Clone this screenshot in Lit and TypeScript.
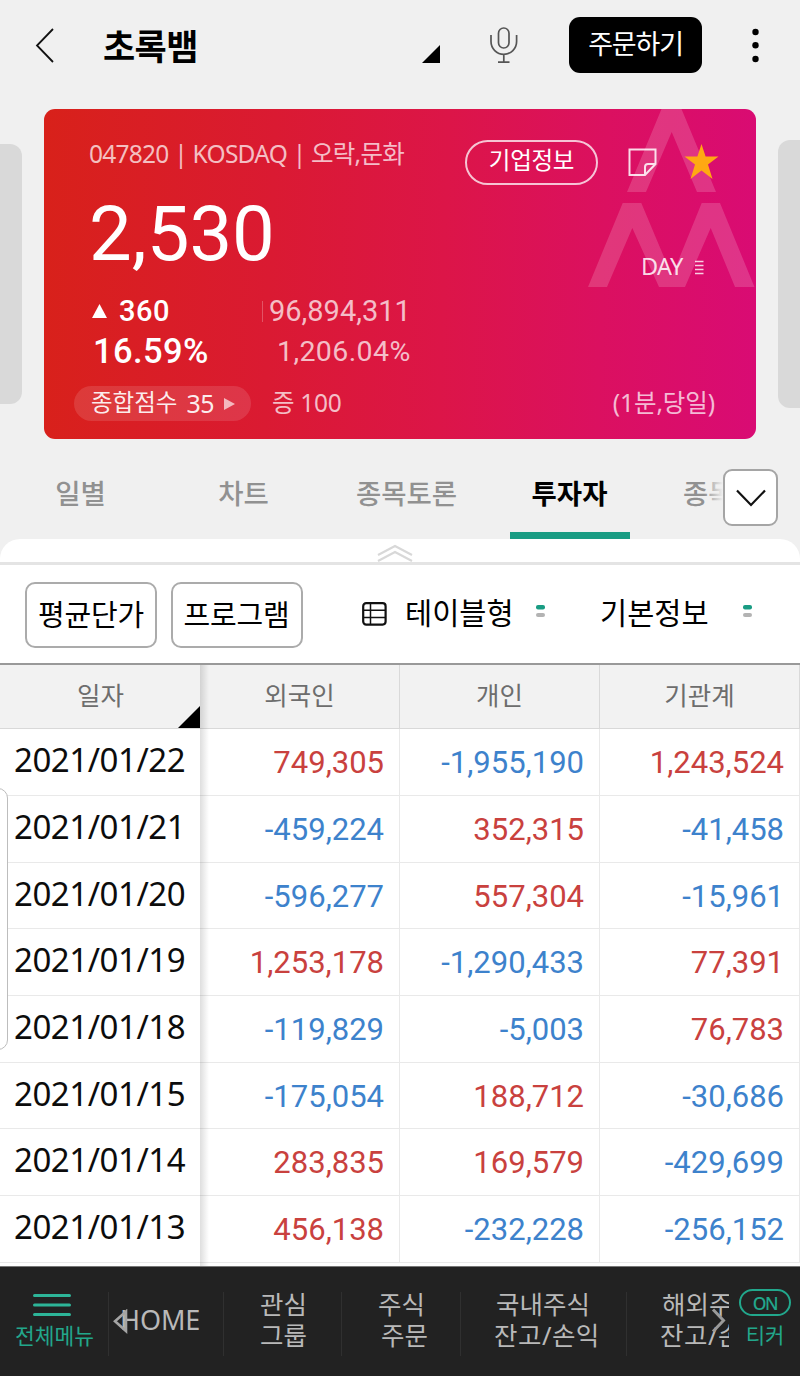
import { LitElement, html, css } from "lit";
import { customElement } from "lit/decorators.js";
import { classMap } from "lit/directives/class-map.js";

const ROWS: [string, string, string, string][] = [
  ["2021/01/22", "749,305", "-1,955,190", "1,243,524"],
  ["2021/01/21", "-459,224", "352,315", "-41,458"],
  ["2021/01/20", "-596,277", "557,304", "-15,961"],
  ["2021/01/19", "1,253,178", "-1,290,433", "77,391"],
  ["2021/01/18", "-119,829", "-5,003", "76,783"],
  ["2021/01/15", "-175,054", "188,712", "-30,686"],
  ["2021/01/14", "283,835", "169,579", "-429,699"],
  ["2021/01/13", "456,138", "-232,228", "-256,152"],
];

const base = css`
  :host {
    display: block;
    font-family: "Noto Sans", "Noto Sans CJK KR", sans-serif;
  }
  * { box-sizing: border-box; }
  svg { display: block; flex: none; }
  span, div { white-space: nowrap; }
`;

@customElement("top-bar")
class TopBar extends LitElement {
  static styles = [base, css`
    .bar { display: flex; height: 109px; align-items: flex-start; }
    .back { margin: 28px 0 0 35px; }
    .title { margin: 21px 0 0 49px; width: 319px; font-size: 35px; line-height: 52px; font-weight: 700; letter-spacing: -0.6px; }
    .tri { margin-top: 45px; }
    .mic { margin: 27px 0 0 50px; }
    .order {
      margin: 17px 0 0 51px; width: 133px; height: 56px; border-radius: 11px; background: #000;
      color: #fff; font-size: 27px; line-height: 54px; text-align: center; letter-spacing: -1.2px;
    }
    .more { margin: 28px 0 0 49px; }
  `];
  render() {
    return html`<div class="bar">
      <svg class="back" width="19" height="36" viewBox="0 0 19 36"><path d="M18 1 L2 17.500 L18 34" fill="none" stroke="#111" stroke-width="1.800"/></svg>
      <div class="title">초록뱀</div>
      <svg class="tri" width="18" height="18" viewBox="0 0 18 18"><path d="M18 0V18H0Z"/></svg>
      <svg class="mic" width="28" height="37" viewBox="0 0 28 37" fill="none" stroke="#555" stroke-width="1.700">
        <rect x="8.500" y="1" width="10.500" height="20" rx="5.200"/>
        <path d="M1 8V14.500A12.800 12.800 0 0 0 26.600 14.500V8M13.800 27.500V35M8 35.200H19.500"/>
      </svg>
      <div class="order">주문하기</div>
      <svg class="more" width="9" height="36" viewBox="0 0 9 36"><circle cx="4.500" cy="4" r="3.200"/><circle cx="4.500" cy="17.300" r="3.200"/><circle cx="4.500" cy="31" r="3.200"/></svg>
    </div>`;
  }
}

@customElement("stock-card")
class StockCard extends LitElement {
  static styles = [base, css`
    .deck { display: flex; height: 330px; }
    .peek { width: 22px; background: #d9d9d9; flex: none; }
    .prev { height: 260px; margin: 35px 22px 0 0; border-radius: 0 12px 12px 0; }
    .next { height: 268px; margin: 31px 0 0 22px; border-radius: 12px 0 0 12px; }
    .card {
      position: relative; width: 712px; height: 330px; border-radius: 11px; overflow: hidden; flex: none;
      background: linear-gradient(92deg, #d8211a 0%, #da1a32 32%, #dc1548 56%, #db1060 78%, #d90b74 100%);
      color: rgba(255, 255, 255, 0.72);
    }
    .mark { position: absolute; left: 0; top: 0; }
    .body { position: relative; }
    .row { display: flex; align-items: flex-start; }
    .r1 { padding: 31px 0 0 45px; height: 75px; }
    .code { width: 376px; font-size: 24.5px; line-height: 27px; letter-spacing: -0.75px; }
    .pill {
      width: 133px; height: 45px; border: 2px solid rgba(255, 255, 255, 0.75); border-radius: 23px; color: #fff;
      font-size: 23.5px; line-height: 37px; text-align: center; letter-spacing: -0.3px;
    }
    .note { margin: 8px 0 0 30px; }
    .star { margin: 4px 0 0 27px; }
    .r2 { height: 108px; padding-left: 45px; font-family: Roboto, sans-serif; }
    .price { width: 552px; font-size: 76px; line-height: 100px; color: #fff; }
    .day { font-family: "Noto Sans", sans-serif; font-size: 23.5px; line-height: 30px; margin-top: 67px; width: 54px; color: rgba(255, 255, 255, .85); letter-spacing: -.6px; }
    .bars { margin-top: 76px; }
    .r3, .r4 { font-family: Roboto, sans-serif; height: 41px; line-height: 39px; }
    .r3 { padding-left: 48px; }
    .up { margin: 12px 12px 0 0; }
    .diff { width: 143px; font-size: 29px; font-weight: 500; color: #fff; letter-spacing: .5px; }
    .rule { width: 1px; height: 21px; margin: 9px 6px 0 0; background: rgba(255, 255, 255, .25); }
    .vol { font-size: 29px; }
    .r4 { padding-left: 49px; line-height: 37px; }
    .pct { width: 184px; font-size: 34.5px; font-weight: 500; color: #fff; letter-spacing: .4px; }
    .vpct { font-size: 28.5px; letter-spacing: .4px; }
    .r5 { padding: 12px 41px 0 30px; line-height: 35px; }
    .score { display: flex; width: 177px; height: 35px; border-radius: 18px; background: rgba(255, 255, 255, .12); padding-left: 17px; font-size: 23.5px; line-height: 33px; color: rgba(255,255,255,.92); }
    .score b { font-weight: 400; font-size: 25px; line-height: 34px; margin: 0 10px 0 9px; letter-spacing: -.5px; }
    .go { margin-top: 12px; }
    .margin { margin-left: 21px; font-size: 24.5px; line-height: 34px; flex: 1; letter-spacing: -.3px; }
    .span { font-size: 24.5px; line-height: 34px; letter-spacing: -.1px; }
  `];
  render() {
    return html`<div class="deck">
      <div class="peek prev"></div>
      <div class="card">
        <svg class="mark" width="712" height="330" viewBox="44 109 712 330" fill="#fff" fill-opacity=".165">
          <path d="M661.500 109H681.500L716 192H697L671.700 132L646 192H627Z"/>
          <path d="M588 287L622.700 203H641.300L672 276L701.700 203H720L754.500 287H735L710.700 228L685 287H659L632.300 228L607 287Z"/>
        </svg>
        <div class="body">
          <div class="row r1">
            <div class="code">047820 | KOSDAQ | 오락,문화</div>
            <div class="pill">기업정보</div>
            <svg class="note" width="29" height="29" viewBox="0 0 29 29" fill="none" stroke="#fff" stroke-opacity=".85" stroke-width="2"><path d="M1.500 1.500H27.500V16L17 27H1.500ZM17 27V19Q17 16 20 16H27.500"/></svg>
            <svg class="star" width="35" height="36" viewBox="0 0 35 36" fill="#ffa812"><path d="M17.500 0L21.600 12.500H34.500L24 20.600L28.500 35L17.500 26.500L6.500 35L11 20.600L.500 12.500H13.400Z"/></svg>
          </div>
          <div class="row r2">
            <div class="price">2,530</div>
            <div class="day">DAY</div>
            <svg class="bars" width="9" height="15" viewBox="0 0 9 15" stroke="#fff" stroke-opacity=".8" stroke-width="1.600"><path d="M0 1.500H8.500M0 5.500H8.500M0 9.500H8.500M0 13.500H8.500"/></svg>
          </div>
          <div class="row r3">
            <svg class="up" width="15" height="14" viewBox="0 0 15 14"><path d="M7.500 0L15 14H0Z" fill="#fff"/></svg>
            <div class="diff">360</div><div class="rule"></div><div class="vol">96,894,311</div>
          </div>
          <div class="row r4"><div class="pct">16.59%</div><div class="vpct">1,206.04%</div></div>
          <div class="row r5">
            <div class="score">종합점수<b>35</b><svg class="go" width="11" height="12" viewBox="0 0 11 12"><path d="M0 0L11 6L0 12Z" fill="#fff" fill-opacity=".65"/></svg></div>
            <div class="margin">증 100</div>
            <div class="span">(1분,당일)</div>
          </div>
        </div>
      </div>
      <div class="peek next"></div>
    </div>`;
  }
}

@customElement("tab-strip")
class TabStrip extends LitElement {
  static styles = [base, css`
    .strip { position: relative; height: 100px; overflow: hidden; }
    .tabs { display: flex; width: 815px; margin-left: -1px; }
    .tab { width: 163px; height: 100px; display: flex; flex-direction: column; align-items: center; font-size: 27.5px; font-weight: 500; line-height: 40px; padding-top: 35px; color: #919191; }
    .on { color: #000; font-weight: 700; }
    .on::after { content: ""; width: 120px; height: 7px; margin-top: 18px; background: #199c83; }
    .fade { position: absolute; left: 704px; top: 20px; width: 96px; height: 70px; background: linear-gradient(90deg, rgba(240,240,240,0), #f0f0f0 19px); }
    .drop { position: absolute; left: 723px; top: 30px; width: 55px; height: 57px; border: 2px solid #a5a5a5; border-radius: 9px; background: #fff; padding: 18px 0 0 11px; }
  `];
  render() {
    const tabs = ["일별", "차트", "종목토론", "투자자", "종목"];
    return html`<div class="strip">
      <div class="tabs">${tabs.map((t, i) => html`<div class=${classMap({ tab: true, on: i === 3, last: i === 4 })}>${t}</div>`)}</div>
      <div class="fade"></div>
      <div class="drop"><svg width="30" height="18" viewBox="0 0 30 18"><path d="M1 1.500L15 16L29 1.500" fill="none" stroke="#111" stroke-width="2.200"/></svg></div>
    </div>`;
  }
  static {
    TabStrip.styles.push(css`.last { align-items: flex-start; padding-left: 32px; }`);
  }
}

@customElement("tool-row")
class ToolRow extends LitElement {
  static styles = [base, css`
    .grip { height: 26px; background: #fff; border-bottom: 3px solid #e4e4e4; display: flex; justify-content: center; padding: 5px 11px 0 0; }
    .corner { background: #fff; border-radius: 20px 20px 0 0; overflow: hidden; }
    .tools { display: flex; height: 98px; background: #fff; padding: 17px 0 0 25px; color: #000; }
    .btn { width: 132px; height: 66px; border: 2px solid #ababab; border-radius: 10px; margin-right: 13.5px; font-size: 29px; line-height: 61px; text-align: center; letter-spacing: -.2px; }
    .grid { margin: 20px 18px 0 46px; }
    .text { font-size: 29.5px; line-height: 61px; }
    .t1 { width: 131px; }
    .t2 { width: 143px; margin-left: 55px; }
    .dot { margin-top: 23px; }
  `];
  dots() {
    return html`<svg class="dot" width="9" height="13" viewBox="0 0 9 13"><rect width="9" height="4.500" rx="2" fill="#199c83"/><rect y="8" width="9" height="4" rx="2" fill="#b3b3b3"/></svg>`;
  }
  render() {
    return html`<div class="corner"><div class="grip">
      <svg width="36" height="18" viewBox="0 0 36 18" fill="none" stroke="#d8d8d8" stroke-width="2.200"><path d="M1 11L18 2L35 11M1 17L18 8L35 17"/></svg>
    </div></div>
    <div class="tools">
      <div class="btn">평균단가</div><div class="btn">프로그램</div>
      <svg class="grid" width="25" height="24" viewBox="0 0 25 24" fill="none" stroke="#111"><rect x="1.200" y="1.200" width="22.400" height="21.400" rx="3" stroke-width="2.200"/><path d="M8.500 1V23M1 8.300H24M1 15.500H24" stroke-width="1.500"/></svg>
      <div class="text t1">테이블형</div>${this.dots()}
      <div class="text t2">기본정보</div>${this.dots()}
    </div>`;
  }
}

@customElement("investor-table")
class InvestorTable extends LitElement {
  static styles = [base, css`
    .table { position: relative; height: 603px; background: #fff; border-top: 2px solid #999; overflow: hidden; }
    .line { display: grid; grid-template-columns: 200px 200px 200px 200px; height: 66.67px; border-bottom: 1px solid #e9e9e9; }
    .head { height: 64.300px; background: #f2f2f2; border-bottom: 1px solid #d9d9d9; }
    .head .cell { font-family: "Noto Sans", "Noto Sans CJK KR", sans-serif; color: #6d6d6d; font-size: 25.5px; line-height: 60px; text-align: center; padding: 0; border-right-color: #d9d9d9; }
    .cell { font-family: Roboto, sans-serif; font-size: 31px; line-height: 67px; text-align: right; padding-right: 15px; border-right: 1px solid #e9e9e9; }
    .cell:first-child { border: 0; }
    .line .date { font-family: "Noto Sans", sans-serif; text-align: left; padding: 0 0 0 14px; color: #0c0c0c; font-size: 33px; line-height: 62px; letter-spacing: -.45px; }
    .head .day { display: flex; justify-content: space-between; padding-left: 77px; }
    .sort { align-self: flex-end; }
    .up { color: #c9413e; }
    .down { color: #3d82cc; }
    .shade { position: absolute; left: 200px; top: 0; width: 9px; height: 603px; background: linear-gradient(90deg, rgba(0,0,0,.13), rgba(0,0,0,0)); }
    .handle { position: absolute; left: -14px; top: 123px; width: 22px; height: 262px; border: 1.500px solid #bdbdbd; border-radius: 10px; background: #fff; }
  `];
  render() {
    return html`<div class="table">
      <div class="line head">
        <div class="cell day">일자<svg class="sort" width="22" height="22" viewBox="0 0 22 22"><path d="M22 0V22H0Z"/></svg></div>
        <div class="cell">외국인</div><div class="cell">개인</div><div class="cell">기관계</div>
      </div>
      ${ROWS.map(([d, ...v]) => html`<div class="line"><div class="cell date">${d}</div>${v.map(n => html`<div class=${classMap({ cell: true, down: n[0] === "-", up: n[0] !== "-" })}>${n}</div>`)}</div>`)}
      <div class="shade"></div>
      <div class="handle"></div>
    </div>`;
  }
}

@customElement("bottom-nav")
class BottomNav extends LitElement {
  static styles = [base, css`
    .nav { position: relative; display: flex; height: 110px; background: #222; border-top: 1px solid #777; color: #b9b9b9; font-size: 25.5px; line-height: 31px; overflow: hidden; }
    .menu { width: 108px; color: #22a78c; font-size: 21.5px; line-height: 30px; padding: 26px 0 0 15px; }
    .menu svg { margin: 0 0 4px 18px; }
    .item { border-left: 1px solid #303030; height: 64px; margin-top: 25px; }
    .item > div { position: relative; top: -3px; }
    .home { width: 115px; font-size: 27px; line-height: 56px; padding-left: 11px; letter-spacing: -.1px; }
    .a { width: 118px; padding-left: 36px; }
    .b { width: 119px; padding-left: 36px; }
    .b div + div { padding-left: 3px; }
    .c { width: 166px; padding-left: 33px; }
    .c div:first-child, .d div:first-child { padding-left: 2px; }
    .c div + div, .d div + div { letter-spacing: .5px; }
    .d { width: 103px; padding-left: 33px; overflow: hidden; }
    .left { position: absolute; left: 113px; top: 42px; }
    .right { position: absolute; left: 711px; top: 41px; }
    .ticker { margin-left: 10px; padding-top: 22px; color: #22a78c; font-size: 21px; line-height: 30px; text-align: center; }
    .on { width: 52px; height: 27px; border: 2px solid #22a78c; border-radius: 14px; font-size: 17.5px; line-height: 25px; margin-bottom: 4px; letter-spacing: -1.3px; font-weight: 500; }
  `];
  render() {
    return html`<div class="nav">
      <div class="menu"><svg width="38" height="24" viewBox="0 0 38 24" stroke="#2db598" stroke-width="3" stroke-linecap="round"><path d="M1.500 2.500H36.500M1.500 12H36.500M1.500 21.500H36.500"/></svg>전체메뉴</div>
      <div class="item home">HOME</div>
      <div class="item a"><div>관심</div><div>그룹</div></div>
      <div class="item b"><div>주식</div><div>주문</div></div>
      <div class="item c"><div>국내주식</div><div>잔고/손익</div></div>
      <div class="item d"><div>해외주식</div><div>잔고/손익</div></div>
      <div class="ticker"><div class="on">ON</div><div>티커</div></div>
      <svg class="left" width="15" height="25" viewBox="0 0 15 25"><path d="M13 2.500V22L2 12.300Z" fill="none" stroke="#a5a5a5" stroke-width="2.600"/></svg>
      <svg class="right" width="16" height="25" viewBox="0 0 16 25"><path d="M2 1.500L12.500 12.500L2 23.500" fill="none" stroke="#9a9a9a" stroke-width="3"/></svg>
    </div>`;
  }
}

@customElement("app-root")
class AppRoot extends LitElement {
  static styles = [base, css`
    .page { width: 800px; height: 1376px; background: #f0f0f0; overflow: hidden; display: flex; flex-direction: column; }
    .page > * { flex: none; }
  `];
  render() {
    return html`<div class="page">
      <top-bar></top-bar><stock-card></stock-card><tab-strip></tab-strip><tool-row></tool-row><investor-table></investor-table><bottom-nav></bottom-nav>
    </div>`;
  }
}
